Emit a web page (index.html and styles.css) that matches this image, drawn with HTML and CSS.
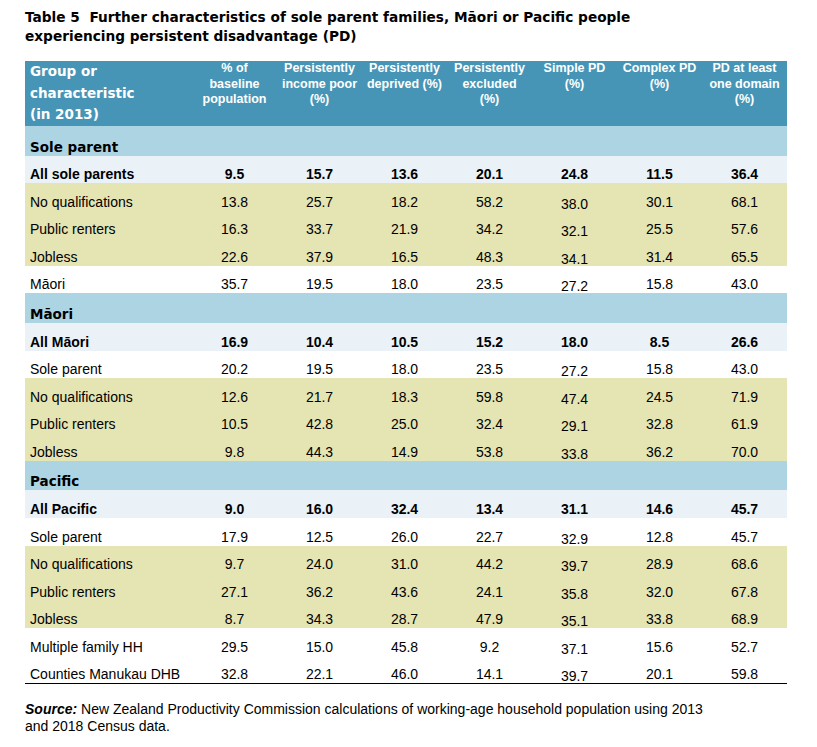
FILE: index.html
```html
<!DOCTYPE html>
<html lang="en">
  <head>
    <meta charset="UTF-8" />
    <title>Table 5 – Persistent disadvantage</title>
    <link rel="stylesheet" href="styles.css">
  </head>
  <body>
    <div class="page">
      <h1 class="table-title">Table 5&nbsp; Further characteristics of sole parent families, Māori or Pacific people experiencing persistent disadvantage (PD)</h1>

      <table class="pd-table">
        <colgroup>
          <col class="col-label">
          <col><col><col><col><col><col><col>
        </colgroup>
        <thead>
          <tr>
            <th class="head-label">Group or<br>characteristic<br>(in 2013)</th>
            <th>% of<br>baseline<br>population</th>
            <th>Persistently<br>income poor<br>(%)</th>
            <th>Persistently<br>deprived (%)</th>
            <th>Persistently<br>excluded<br>(%)</th>
            <th>Simple PD<br>(%)</th>
            <th>Complex PD<br>(%)</th>
            <th>PD at least<br>one domain<br>(%)</th>
          </tr>
        </thead>
        <tbody>
          <!-- Sole parent -->
          <tr class="band"><td colspan="8">Sole parent</td></tr>
          <tr class="total">
            <td>All sole parents</td><td>9.5</td><td>15.7</td><td>13.6</td><td>20.1</td><td>24.8</td><td>11.5</td><td>36.4</td>
          </tr>
          <tr class="hl">
            <td>No qualifications</td><td>13.8</td><td>25.7</td><td>18.2</td><td>58.2</td><td>38.0</td><td>30.1</td><td>68.1</td>
          </tr>
          <tr class="hl">
            <td>Public renters</td><td>16.3</td><td>33.7</td><td>21.9</td><td>34.2</td><td>32.1</td><td>25.5</td><td>57.6</td>
          </tr>
          <tr class="hl">
            <td>Jobless</td><td>22.6</td><td>37.9</td><td>16.5</td><td>48.3</td><td>34.1</td><td>31.4</td><td>65.5</td>
          </tr>
          <tr>
            <td>Māori</td><td>35.7</td><td>19.5</td><td>18.0</td><td>23.5</td><td>27.2</td><td>15.8</td><td>43.0</td>
          </tr>

          <!-- Māori -->
          <tr class="band"><td colspan="8">Māori</td></tr>
          <tr class="total">
            <td>All Māori</td><td>16.9</td><td>10.4</td><td>10.5</td><td>15.2</td><td>18.0</td><td>8.5</td><td>26.6</td>
          </tr>
          <tr>
            <td>Sole parent</td><td>20.2</td><td>19.5</td><td>18.0</td><td>23.5</td><td>27.2</td><td>15.8</td><td>43.0</td>
          </tr>
          <tr class="hl">
            <td>No qualifications</td><td>12.6</td><td>21.7</td><td>18.3</td><td>59.8</td><td>47.4</td><td>24.5</td><td>71.9</td>
          </tr>
          <tr class="hl">
            <td>Public renters</td><td>10.5</td><td>42.8</td><td>25.0</td><td>32.4</td><td>29.1</td><td>32.8</td><td>61.9</td>
          </tr>
          <tr class="hl">
            <td>Jobless</td><td>9.8</td><td>44.3</td><td>14.9</td><td>53.8</td><td>33.8</td><td>36.2</td><td>70.0</td>
          </tr>

          <!-- Pacific -->
          <tr class="band"><td colspan="8">Pacific</td></tr>
          <tr class="total">
            <td>All Pacific</td><td>9.0</td><td>16.0</td><td>32.4</td><td>13.4</td><td>31.1</td><td>14.6</td><td>45.7</td>
          </tr>
          <tr>
            <td>Sole parent</td><td>17.9</td><td>12.5</td><td>26.0</td><td>22.7</td><td>32.9</td><td>12.8</td><td>45.7</td>
          </tr>
          <tr class="hl">
            <td>No qualifications</td><td>9.7</td><td>24.0</td><td>31.0</td><td>44.2</td><td>39.7</td><td>28.9</td><td>68.6</td>
          </tr>
          <tr class="hl">
            <td>Public renters</td><td>27.1</td><td>36.2</td><td>43.6</td><td>24.1</td><td>35.8</td><td>32.0</td><td>67.8</td>
          </tr>
          <tr class="hl">
            <td>Jobless</td><td>8.7</td><td>34.3</td><td>28.7</td><td>47.9</td><td>35.1</td><td>33.8</td><td>68.9</td>
          </tr>
          <tr>
            <td>Multiple family HH</td><td>29.5</td><td>15.0</td><td>45.8</td><td>9.2</td><td>37.1</td><td>15.6</td><td>52.7</td>
          </tr>
          <tr>
            <td>Counties Manukau DHB</td><td>32.8</td><td>22.1</td><td>46.0</td><td>14.1</td><td>39.7</td><td>20.1</td><td>59.8</td>
          </tr>
        </tbody>
      </table>

      <p class="source"><b><i>Source:</i></b> New Zealand Productivity Commission calculations of working-age household population using 2013<br>and 2018 Census data.</p>
    </div>
  </body>
</html>
```

FILE: styles.css
```css
body {
  margin: 0;
  padding: 0;
  background-color: #ffffff;
  color: #000000;
  font-family: 'Liberation Sans', Arial, sans-serif;
}

.page {
  padding: 8px 25px 0 25px;
}

/* タイトル */
.table-title {
  margin: 0 0 15px 0;
  width: 660px;
  font-family: 'DejaVu Sans', sans-serif;
  font-size: 13.7px;
  line-height: 19px;
  font-weight: bold;
}

/* 表 */
.pd-table {
  width: 762px;
  table-layout: fixed;
  border-collapse: collapse;
  border-spacing: 0;
  border-bottom: 1px solid #000000;
}

.pd-table col {
  width: 85px;
}

.pd-table col.col-label {
  width: 167px;
}

.pd-table thead tr {
  height: 65px;
}

.pd-table th {
  padding: 0 2px;
  background-color: #4795b6;
  color: #ffffff;
  font-size: 12.5px;
  line-height: 15.5px;
  font-weight: bold;
  text-align: center;
  vertical-align: top;
}

.pd-table th.head-label {
  padding-left: 5px;
  text-align: left;
  font-family: 'DejaVu Sans', sans-serif;
  font-size: 13.5px;
  line-height: 21.5px;
}

.pd-table tbody tr {
  height: 27.6px;
}

.pd-table td {
  padding: 0 2px 1px 2px;
  font-size: 14px;
  line-height: 16px;
  text-align: center;
  vertical-align: bottom;
  white-space: nowrap;
}

.pd-table td:first-child {
  padding-left: 5px;
  text-align: left;
}

/* Simple PD 列は少し下がっている */
.pd-table tr:not(.total) td:nth-child(6) {
  line-height: 12px;
}

/* 区分の帯 */
.pd-table tbody tr.band {
  height: 29.5px;
}

.pd-table tr.band td {
  padding-bottom: 1px;
  background-color: #add4e3;
  font-family: 'DejaVu Sans', sans-serif;
  font-size: 13.5px;
  font-weight: bold;
}

.pd-table tr.total td {
  background-color: #eaf2f7;
  font-weight: bold;
}

.pd-table tr.hl td {
  background-color: #e5e4b3;
}

/* 出典 */
.source {
  margin: 17px 0 0 0;
  font-size: 14px;
  line-height: 17px;
}
```
